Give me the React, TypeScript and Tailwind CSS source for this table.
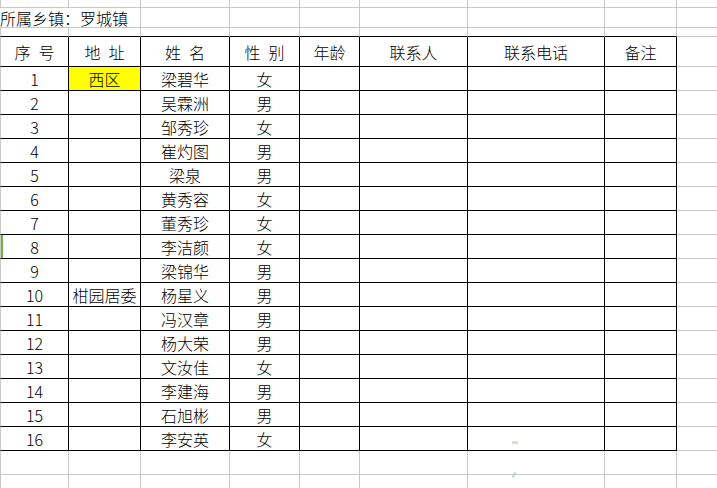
import React from "react";

const W = [
  "w-[69px] border-l border-l-[#c8c8c8]",
  "w-[72px]",
  "w-[89px]",
  "w-[70px]",
  "w-[60px]",
  "w-[108px]",
  "w-[137px]",
  "w-[72px]",
];

const font = "font-['Noto_Sans_CJK_SC','Noto_Sans',sans-serif] font-light text-[16px] leading-none text-black";

type CellProps = {
  i: number;
  black: boolean;
  children?: React.ReactNode;
  extra?: string;
};

function Cell({ i, black, children, extra = "" }: CellProps) {
  const bord = black
    ? "border-r border-b border-r-black border-b-black"
    : "border-r border-b border-r-[#c8c8c8] border-b-[#c8c8c8]";
  return (
    <div className={`${W[i]} ${bord} shrink-0 flex items-center justify-center pt-[1px] ${font} ${extra}`}>
      {children}
    </div>
  );
}

function Rest({ black }: { black?: boolean }) {
  return (
    <div
      className={`flex-1 border-b ${black ? "border-b-black" : "border-b-[#c8c8c8]"}`}
    />
  );
}

function GrayRow({ h, bottomBlack }: { h: string; bottomBlack?: boolean }) {
  return (
    <div className={`flex ${h}`}>
      {W.map((_, i) => (
        <div
          key={i}
          className={`${W[i]} shrink-0 border-r border-r-[#c8c8c8] border-b ${
            bottomBlack ? "border-b-black" : "border-b-[#c8c8c8]"
          }`}
        />
      ))}
      <Rest />
    </div>
  );
}

const data: [string, string, string, string][] = [
  ["1", "西区", "梁碧华", "女"],
  ["2", "", "吴霖洲", "男"],
  ["3", "", "邹秀珍", "女"],
  ["4", "", "崔灼图", "男"],
  ["5", "", "梁泉", "男"],
  ["6", "", "黄秀容", "女"],
  ["7", "", "董秀珍", "女"],
  ["8", "", "李洁颜", "女"],
  ["9", "", "梁锦华", "男"],
  ["10", "柑园居委", "杨星义", "男"],
  ["11", "", "冯汉章", "男"],
  ["12", "", "杨大荣", "男"],
  ["13", "", "文汝佳", "女"],
  ["14", "", "李建海", "男"],
  ["15", "", "石旭彬", "男"],
  ["16", "", "李安英", "女"],
];

const headers = ["序\u2002号", "地\u2002址", "姓\u2002名", "性\u2002别", "年龄", "联系人", "联系电话", "备注"];

export default function App() {
  return (
    <div className="relative w-[717px] h-[488px] overflow-hidden bg-white">
      {/* row 0 */}
      <GrayRow h="h-[8px]" />
      {/* title row */}
      <div className="flex h-[20px]">
        <div
          className={`w-[141px] shrink-0 border-r border-b border-r-[#c8c8c8] border-b-[#c8c8c8] flex items-center whitespace-nowrap pt-[1px] ${font}`}
        >
          所属乡镇：罗城镇
        </div>
        {W.slice(2).map((_, k) => (
          <div
            key={k}
            className={`${W[k + 2]} shrink-0 border-r border-b border-r-[#c8c8c8] border-b-[#c8c8c8]`}
          />
        ))}
        <Rest />
      </div>
      {/* thin row */}
      <GrayRow h="h-[9px]" bottomBlack />
      {/* header */}
      <div className="flex h-[30px]">
        {headers.map((t, i) => (
          <Cell key={i} i={i} black>
            {t}
          </Cell>
        ))}
        <Rest />
      </div>
      {data.map((r, ri) => (
        <div key={ri} className="flex h-[24px]">
          <Cell i={0} black extra={ri === 7 ? "shadow-[inset_2px_0_0_#6cb33f]" : ""}>
            {r[0]}
          </Cell>
          <Cell i={1} black extra={r[1] === "西区" ? "bg-[#ffff00]" : ""}>
            {r[1]}
          </Cell>
          <Cell i={2} black>
            {r[2]}
          </Cell>
          <Cell i={3} black>
            {r[3]}
          </Cell>
          <Cell i={4} black />
          <Cell i={5} black />
          <Cell i={6} black />
          <Cell i={7} black />
          <Rest />
        </div>
      ))}
      <GrayRow h="h-[24px]" />
      <GrayRow h="h-[24px]" />

      {/* faint marks over the sheet */}
      <div className="absolute left-[512px] top-[441px] w-[6px] h-[3px] bg-[#cfe3c8]" />
      <div className="absolute left-[513px] top-[472px] w-[2px] h-[6px] bg-[#b9cde6] rotate-[30deg]" />
    </div>
  );
}
